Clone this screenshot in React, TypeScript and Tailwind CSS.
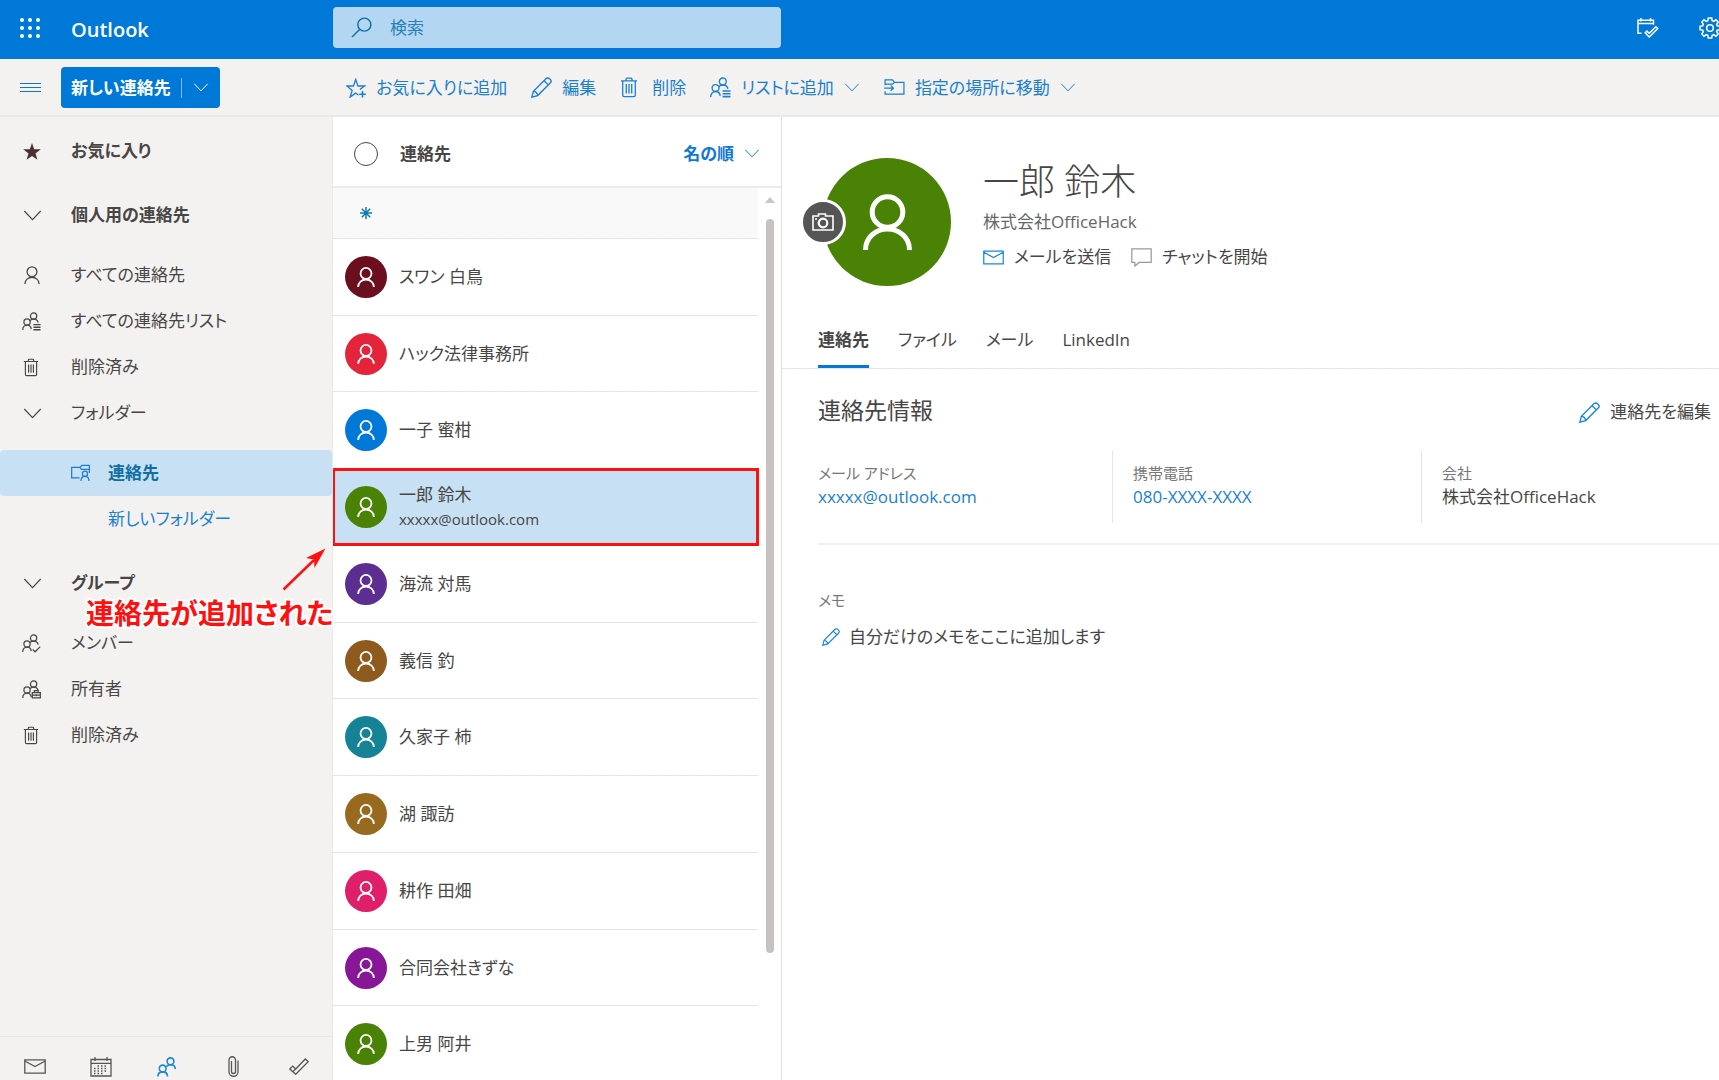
import type { ReactNode } from "react";

type IconProps = { className?: string };

function Svg({
  box,
  className,
  stroke = 1.3,
  children,
}: {
  box: string;
  className?: string;
  stroke?: number;
  children: ReactNode;
}) {
  return (
    <svg
      viewBox={box}
      className={className}
      fill="none"
      stroke="currentColor"
      strokeWidth={stroke}
      aria-hidden="true"
    >
      {children}
    </svg>
  );
}

const Chevron = ({ className }: IconProps) => (
  <Svg box="0 0 18 11" className={className} stroke={1.2}>
    <path d="M.8 1l8.2 8.6L17.2 1" />
  </Svg>
);

const Person = ({ className, stroke = 5 }: IconProps & { stroke?: number }) => (
  <Svg box="0 0 49 56" className={className} stroke={stroke}>
    <circle cx="24.5" cy="18" r="15.3" />
    <path d="M2.6 56v-1a21.9 20 0 0 1 43.8 0v1" />
  </Svg>
);

const TwoPeople = () => (
  <>
    <circle cx="12.2" cy="4.3" r="3.3" />
    <circle cx="5.3" cy="10.5" r="3.3" />
    <path d="M.7 19c0-3.200 2-5.200 4.600-5.200S9.500 15.600 9.700 18M8.300 9.200c1-1 2.300-1.600 3.900-1.600 2.500 0 4.300 1.300 4.900 3.600" />
  </>
);

const PeopleList = ({ className }: IconProps) => (
  <Svg box="0 0 20 20" className={className}>
    <TwoPeople />
    <path d="M12 13.300h7.500M12 16h7.500M12 18.700h7.500" strokeWidth="1.5" />
  </Svg>
);

const PeopleCheck = ({ className }: IconProps) => (
  <Svg box="0 0 20 20" className={className}>
    <TwoPeople />
    <path d="M11.300 16.300l2.500 2.400 5.400-5.400" />
  </Svg>
);

const PeopleLock = ({ className }: IconProps) => (
  <Svg box="0 0 20 20" className={className}>
    <TwoPeople />
    <path d="M10.800 13.200h8.500v5.700h-8.500zM10.800 16h8.500M13 13v-1.800h4V13M15 15v2" />
  </Svg>
);

const PeopleNav = ({ className }: IconProps) => (
  <Svg box="0 0 20 20" className={className} stroke={1.6}>
    <circle cx="13.5" cy="4.3" r="3.4" />
    <circle cx="5.7" cy="11.5" r="3.4" />
    <path d="M.9 19.500c0-2.900 2.100-4.600 4.800-4.600s4.800 1.700 4.800 4.600M9.300 9.700c.8-1.300 2.300-2 4.200-2 2.700 0 4.800 1.700 4.800 4.400" />
  </Svg>
);

const Trash = ({ className }: IconProps) => (
  <Svg box="0 0 18 20" className={className}>
    <path d="M1 3.300h16M6 3V1.700a1 1 0 0 1 1-1h4a1 1 0 0 1 1 1V3M2.700 3.300v14.500c0 .9.500 1.400 1.400 1.400h9.800c.9 0 1.400-.5 1.400-1.400V3.300M6.300 6.500v9.500M9 6.500v9.500M11.700 6.500v9.500" />
  </Svg>
);

const Pencil = ({ className }: IconProps) => (
  <Svg box="0 0 20 20" className={className}>
    <path d="M.8 19.200l1.500-5.600L14.200 1.700c1-1 2.500-1 3.400-.1l.8.8c.9.900.9 2.400-.1 3.400L6.400 17.700zM2.300 13.600c1.800.2 3.700 1.900 4.100 4.100M12.500 3.500l4 4" />
  </Svg>
);

const StarPlus = ({ className }: IconProps) => (
  <Svg box="0 0 20 20" className={className}>
    <path d="M12.500 17.300L9.700 15.100l-5.600 4 2.100-6.700L.9 8h6.600l2.200-6.600L11.900 8h6.600l-4.600 3.600" />
    <path d="M16.500 13v6.500M13.200 16.200h6.600" strokeWidth="1.6" />
  </Svg>
);

const FolderMove = ({ className }: IconProps) => (
  <Svg box="0 0 22 18" className={className}>
    <path d="M1 6.500V1h8l2 2.500h10V16H1v-3M1 5.500h8l2-2M0 9.700h10M7 6.900l2.900 2.800L7 12.500" />
  </Svg>
);

const FolderPerson = ({ className }: IconProps) => (
  <Svg box="0 0 20 18" className={className}>
    <path d="M9 14.200H.7V3h8.800l2-2h7.800v8M9.500 3l1.500 2.300h8" />
    <circle cx="14.7" cy="9.8" r="2.7" />
    <path d="M10.500 17.500c0-3 1.700-5 4.200-5s4.200 2 4.200 5" />
  </Svg>
);

const Envelope = ({ className }: IconProps) => (
  <Svg box="0 0 22 15" className={className}>
    <path d="M.8.8h20.400v13.400H.8zM.8 2l10.200 5.500L21.200 2" />
  </Svg>
);

const Chat = ({ className }: IconProps) => (
  <Svg box="0 0 22 20" className={className}>
    <path d="M.8.8h20.400v14.400H8.500L4 19v-3.800H.8z" />
  </Svg>
);

const Camera = ({ className }: IconProps) => (
  <Svg box="0 0 22 18" className={className} stroke={1.6}>
    <path d="M1 3h5.500V1h7v2H21v14H1zM3 6h2" />
    <circle cx="11" cy="10" r="4.3" strokeWidth="2.200" />
  </Svg>
);

const Search = ({ className }: IconProps) => (
  <Svg box="0 0 22 22" className={className} stroke={1.5}>
    <circle cx="14" cy="8" r="6.8" />
    <path d="M9 13L1 21" />
  </Svg>
);

const CalendarCheck = ({ className }: IconProps) => (
  <Svg box="0 0 22 20" className={className} stroke={1.5}>
    <path d="M4.500 15.200H1V2.200h15.500v4.500M1 5.500h15.500M4 0v3.500M13.500 0v3.500" />
    <path d="M8.200 14.800l1.700-1.700 2.300 2.200 6.700-6.600 1.800 1.800-8.500 8.500z" />
  </Svg>
);

const Gear = ({ className }: IconProps) => (
  <Svg box="0 0 22 22" className={className} stroke={1.5}>
    <path d="M9.300 1h3.400l.5 2.700 1.500.6L17 2.800 19.200 5l-1.500 2.300.6 1.500 2.700.5v3.400l-2.700.5-.6 1.500 1.500 2.300-2.200 2.200-2.300-1.500-1.500.6-.5 2.700H9.300l-.5-2.700-1.500-.6L5 19.200 2.800 17l1.500-2.300-.6-1.500L1 12.700V9.300l2.700-.5.6-1.500L2.800 5 5 2.800l2.300 1.500 1.500-.6z" />
    <circle cx="11" cy="11" r="3.3" />
  </Svg>
);

const Calendar = ({ className }: IconProps) => (
  <Svg box="0 0 22 20" className={className}>
    <path d="M1 2.500h20V19H1zM1 6.300h20M5 0v4M17 0v4" />
    <path d="M7.500 9h10.500M4 11.500h14M4 14h14M4 16.500h10" strokeDasharray="1.500 2" />
  </Svg>
);

const Clip = ({ className }: IconProps) => (
  <Svg box="0 0 11 21" className={className}>
    <path d="M3.500 5v10.500a2 2 0 0 0 4 0V4A3.200 3.200 0 0 0 1 4v11.800a4.500 4.500 0 0 0 9 0V4.500" />
  </Svg>
);

const Check = ({ className }: IconProps) => (
  <Svg box="0 0 20 17" className={className}>
    <path d="M.8 11l2.900-2.900 3 2.900L16.300 1l2.900 2.700L6.700 16.300zM3.600 13.700l3.100-2.700" />
  </Svg>
);

function Header() {
  return (
    <header className="flex h-[59px] shrink-0 items-center bg-[#0078d7] text-white">
      <button aria-label="アプリ起動ツール" className="-mt-1 ml-5 grid grid-cols-3 gap-1">
        {Array.from({ length: 9 }, (_, i) => (
          <span key={i} className="size-1 rounded-full bg-white" />
        ))}
      </button>
      <h1 className="ml-[31px] w-[262px] text-[20px] font-semibold">Outlook</h1>
      <label className="mb-1 flex h-[41px] w-[448px] items-center rounded-sm bg-[#b3d7f2] pl-[18px] text-[#106ea8]">
        <Search className="size-[21px]" />
        <input
          type="search"
          aria-label="検索"
          placeholder="検索"
          className="ml-[18px] w-80 bg-transparent outline-none placeholder:text-[#2b7fb8]"
        />
      </label>
      <button aria-label="予定" className="-mt-1 mr-10 ml-auto">
        <CalendarCheck className="h-5 w-[22px]" />
      </button>
      <button aria-label="設定" className="-mt-1 -mr-[2px]">
        <Gear className="size-[22px]" />
      </button>
    </header>
  );
}

function Command({ icon, label, menu }: { icon: ReactNode; label: string; menu?: boolean }) {
  return (
    <button className="flex items-center gap-[10px] whitespace-nowrap">
      {icon}
      <span>{label}</span>
      {menu && <Chevron className="h-[9px] w-4" />}
    </button>
  );
}

function CommandBar() {
  return (
    <div className="flex h-[58px] shrink-0 items-center border-b-2 border-[#ebe9e8] bg-[#f3f2f1] pt-px">
      <div className="flex w-[333px] shrink-0 items-center pl-5">
        <button aria-label="ナビゲーション" className="flex w-[21px] flex-col gap-[3px]">
          <span className="h-px bg-[#0f78b8]" />
          <span className="h-px bg-[#0f78b8]" />
          <span className="h-px bg-[#0f78b8]" />
        </button>
        <div className="ml-5 flex h-[41px] w-[159px] items-center rounded-sm bg-[#0078d7] text-white">
          <button className="pl-[10px] font-bold">新しい連絡先</button>
          <span className="ml-auto h-5 w-px bg-[#7fbcea]" />
          <button aria-label="その他の新規作成" className="px-[11px]">
            <Chevron className="h-[9px] w-4" />
          </button>
        </div>
      </div>
      <div className="flex items-center gap-6 pl-[13px] text-[#1a7fd0]">
        <Command icon={<StarPlus className="size-5" />} label="お気に入りに追加" />
        <Command icon={<Pencil className="size-[21px]" />} label="編集" />
        <Command icon={<Trash className="mr-1 h-[21px] w-[18px]" />} label="削除" />
        <Command icon={<PeopleList className="size-[21px]" />} label="リストに追加" menu />
        <Command icon={<FolderMove className="h-[17px] w-[21px]" />} label="指定の場所に移動" menu />
      </div>
    </div>
  );
}

function NavRow({ icon, label, bold }: { icon: ReactNode; label: string; bold?: boolean }) {
  return (
    <button className="flex h-[46px] w-full items-center pl-[22px] text-left">
      <span className="flex w-[49px] items-center">{icon}</span>
      <span className={bold ? "font-semibold" : ""}>{label}</span>
    </button>
  );
}

function Sidebar() {
  return (
    <nav className="relative flex w-[333px] shrink-0 flex-col border-r border-[#ebe9e8] bg-[#f3f2f1] pt-[11px]">
      <NavRow
        bold
        label="お気に入り"
        icon={
          <svg viewBox="0 0 20 19" className="ml-px h-[17px] w-[18px] fill-[#4a2f33]" aria-hidden="true">
            <path d="M10 0l2.400 7.100h7.500l-6 4.500 2.200 7.200L10 14.400l-6.100 4.400 2.200-7.200-6-4.500h7.500z" />
          </svg>
        }
      />
      <div className="mt-[18px]">
        <NavRow bold label="個人用の連絡先" icon={<Chevron className="ml-px h-[11px] w-[19px]" />} />
      </div>
      <div className="mt-[14px]">
        <NavRow label="すべての連絡先" icon={<Person stroke={4} className="ml-[2px] h-[18px] w-4" />} />
        <NavRow label="すべての連絡先リスト" icon={<PeopleList className="size-[19px]" />} />
        <NavRow label="削除済み" icon={<Trash className="ml-px h-[19px] w-4" />} />
        <NavRow label="フォルダー" icon={<Chevron className="ml-px h-[11px] w-[19px]" />} />
      </div>
      <div className="mt-[14px]">
        <button className="flex h-[46px] w-full items-center rounded-sm bg-[#c7e0f4] pl-[71px] font-semibold text-[#0f6fa3]">
          <FolderPerson className="mr-[18px] h-[18px] w-[19px] text-[#1a7fd0]" />
          連絡先
        </button>
        <button className="flex h-[46px] w-full items-center pl-[108px] text-[#1a7fd0]">
          新しいフォルダー
        </button>
      </div>
      <div className="mt-[18px]">
        <NavRow bold label="グループ" icon={<Chevron className="ml-px h-[11px] w-[19px]" />} />
      </div>
      <div className="mt-[14px]">
        <NavRow label="メンバー" icon={<PeopleCheck className="size-[19px]" />} />
        <NavRow label="所有者" icon={<PeopleLock className="size-[19px]" />} />
        <NavRow label="削除済み" icon={<Trash className="ml-px h-[19px] w-4" />} />
      </div>

      <div className="mt-auto grid h-11 shrink-0 grid-cols-5 items-end justify-items-center border-t border-[#e6e4e2] pb-[3px] pl-[2px] text-[#555]">
        <button aria-label="メール" className="pb-[3px]">
          <Envelope className="h-[15px] w-[22px]" />
        </button>
        <button aria-label="予定表">
          <Calendar className="h-5 w-[22px]" />
        </button>
        <button aria-label="連絡先" className="text-[#1a86dd]">
          <PeopleNav className="size-5" />
        </button>
        <button aria-label="ファイル">
          <Clip className="h-[21px] w-[11px]" />
        </button>
        <button aria-label="タスク" className="pb-[2px]">
          <Check className="h-[17px] w-5" />
        </button>
      </div>

      <svg viewBox="0 0 44 44" className="absolute top-[430px] left-[282px] size-11" aria-hidden="true">
        <path d="M1.500 42.500L32 13" stroke="#ff1010" strokeWidth="2.5" />
        <path d="M43.500 1.500L24 11l8 1.500L32.500 21z" fill="#ff1010" />
      </svg>
      <p className="absolute top-[475px] left-[86px] text-[28px] leading-[42px] font-bold whitespace-nowrap text-[#ff1010] [-webkit-text-stroke:4px_white] [paint-order:stroke_fill]">
        連絡先が追加された
      </p>
    </nav>
  );
}

const contacts = [
  { name: "スワン 白鳥", color: "bg-[#6b0f1e]" },
  { name: "ハック法律事務所", color: "bg-[#e3243b]" },
  { name: "一子 蜜柑", color: "bg-[#0078d7]" },
  { name: "一郎 鈴木", color: "bg-[#498205]", mail: "xxxxx@outlook.com" },
  { name: "海流 対馬", color: "bg-[#5c2e91]" },
  { name: "義信 釣", color: "bg-[#8e5a1d]" },
  { name: "久家子 柿", color: "bg-[#158296]" },
  { name: "湖 諏訪", color: "bg-[#986a20]" },
  { name: "耕作 田畑", color: "bg-[#e01f6a]" },
  { name: "合同会社きずな", color: "bg-[#881798]" },
  { name: "上男 阿井", color: "bg-[#498205]" },
];

function ContactList() {
  return (
    <section className="flex w-[449px] shrink-0 flex-col border-r border-[#e1dfdd] bg-white">
      <div className="flex h-[71px] shrink-0 items-center border-b-2 border-[#edebe9] px-[21px] pt-1">
        <input
          type="checkbox"
          aria-label="すべて選択"
          className="size-6 appearance-none rounded-full border border-[#444]"
        />
        <h2 className="ml-[22px] font-semibold">連絡先</h2>
        <button className="ml-auto flex items-center gap-[10px] font-semibold text-[#0f78d4]">
          名の順
          <Chevron className="h-[9px] w-4" />
        </button>
      </div>
      <div className="flex min-h-0 flex-1">
        <div className="min-w-0 flex-1">
          <div className="flex h-[51px] items-center border-b border-[#e6e4e2] bg-[#f9f9f9] pl-[27px] text-[#107ab5]">
            <Svg box="0 0 12 12" className="size-3" stroke={1.5}>
              <path d="M6 0v12M0 6h12M1.800 1.800l8.400 8.400M10.200 1.800l-8.400 8.400" />
            </Svg>
          </div>
          <ul>
            {contacts.map((c) => (
              <li key={c.name} className="h-[77px] border-b border-[#e6e4e2] nth-[4n+2]:h-[76px]">
                <button
                  className={
                    c.mail
                      ? "flex h-full w-full items-center bg-[#c7e0f4] pl-3 text-left outline-3 -outline-offset-2 outline-[#ff1010]"
                      : "flex h-full w-full items-center pl-3 text-left"
                  }
                >
                  <span className={`flex size-[42px] items-center justify-center rounded-full text-white ${c.color}`}>
                    <Person className="h-5 w-[18px]" />
                  </span>
                  <span className="ml-3 flex flex-col">
                    <span className="leading-6">{c.name}</span>
                    {c.mail && <span className="text-[15px] leading-6">{c.mail}</span>}
                  </span>
                </button>
              </li>
            ))}
          </ul>
        </div>
        <div className="flex w-[23px] shrink-0 flex-col items-center pt-[9px]">
          <svg viewBox="0 0 10 6" className="h-[6px] w-[10px] fill-[#c8c6c4]" aria-hidden="true">
            <path d="M5 0l5 6H0z" />
          </svg>
          <span className="mt-4 h-[734px] w-2 rounded-full bg-[#c4c3c1]" />
        </div>
      </div>
    </section>
  );
}

function Detail() {
  return (
    <main className="flex min-w-0 flex-1 flex-col bg-white">
      <div className="flex pt-[41px] pl-[41px]">
        <div className="relative flex size-32 shrink-0 items-center justify-center rounded-full bg-[#498205] text-white">
          <Person className="h-14 w-[49px]" />
          <button
            aria-label="写真を変更"
            className="absolute top-[41px] -left-[23px] flex size-[46px] items-center justify-center rounded-full border-[3px] border-white bg-[#555]"
          >
            <Camera className="h-[18px] w-[22px]" />
          </button>
        </div>
        <div className="ml-8">
          <h2 className="text-[36px] leading-[48px] font-light">一郎 鈴木</h2>
          <p className="leading-8 text-[#666]">株式会社OfficeHack</p>
          <div className="mt-px flex h-9 items-center gap-5">
            <button className="flex items-center gap-[10px]">
              <Envelope className="h-[15px] w-[21px] text-[#1a86dd]" />
              メールを送信
            </button>
            <button className="flex items-center gap-[10px]">
              <Chat className="h-[19px] w-[21px] text-[#999]" />
              チャットを開始
            </button>
          </div>
        </div>
      </div>
      <div role="tablist" className="mt-7 flex gap-[29px] border-b border-[#e6e4e2] pl-9">
        <button role="tab" aria-selected="true" className="h-[54px] border-b-3 border-[#0078d7] font-semibold">
          連絡先
        </button>
        <button role="tab" className="h-[52px]">ファイル</button>
        <button role="tab" className="h-[52px]">メール</button>
        <button role="tab" className="h-[52px]">LinkedIn</button>
      </div>
      <div className="flex h-[82px] items-center justify-between pr-2 pl-9">
        <h3 className="text-[23px]">連絡先情報</h3>
        <button className="flex items-center gap-[10px] pt-1">
          <Pencil className="size-[21px] text-[#1a86dd]" />
          連絡先を編集
        </button>
      </div>
      <div className="ml-9 border-b-2 border-[#f0efee] pb-5">
        <dl className="flex">
          <div className="h-[72px] w-[294px] pt-[10px]">
            <dt className="text-[15px] leading-6 text-[#777]">メール アドレス</dt>
            <dd className="leading-6 text-[#1a7fd0]">
              <a href="#mail">xxxxx@outlook.com</a>
            </dd>
          </div>
          <div className="h-[72px] w-[309px] border-l border-[#e6e4e2] pt-[10px] pl-5">
            <dt className="text-[15px] leading-6 text-[#777]">携帯電話</dt>
            <dd className="leading-6 text-[#1a7fd0]">
              <a href="#tel">080-XXXX-XXXX</a>
            </dd>
          </div>
          <div className="h-[72px] flex-1 border-l border-[#e6e4e2] pt-[10px] pl-5">
            <dt className="text-[15px] leading-6 text-[#777]">会社</dt>
            <dd className="leading-6">株式会社OfficeHack</dd>
          </div>
        </dl>
      </div>
      <div className="pt-[43px] pl-9">
        <h4 className="text-[15px] leading-6 text-[#777]">メモ</h4>
        <button className="mt-3 ml-1 flex items-center gap-[9px]">
          <Pencil className="size-[18px] text-[#1a86dd]" />
          自分だけのメモをここに追加します
        </button>
      </div>
    </main>
  );
}

export default function App() {
  return (
    <div
      lang="ja"
      className="flex h-screen flex-col overflow-hidden bg-white font-['Open_Sans','Noto_Sans_CJK_JP',sans-serif] text-[17px] text-[#484644] [font-feature-settings:'palt']"
    >
      <Header />
      <CommandBar />
      <div className="flex min-h-0 flex-1">
        <Sidebar />
        <ContactList />
        <Detail />
      </div>
    </div>
  );
}
